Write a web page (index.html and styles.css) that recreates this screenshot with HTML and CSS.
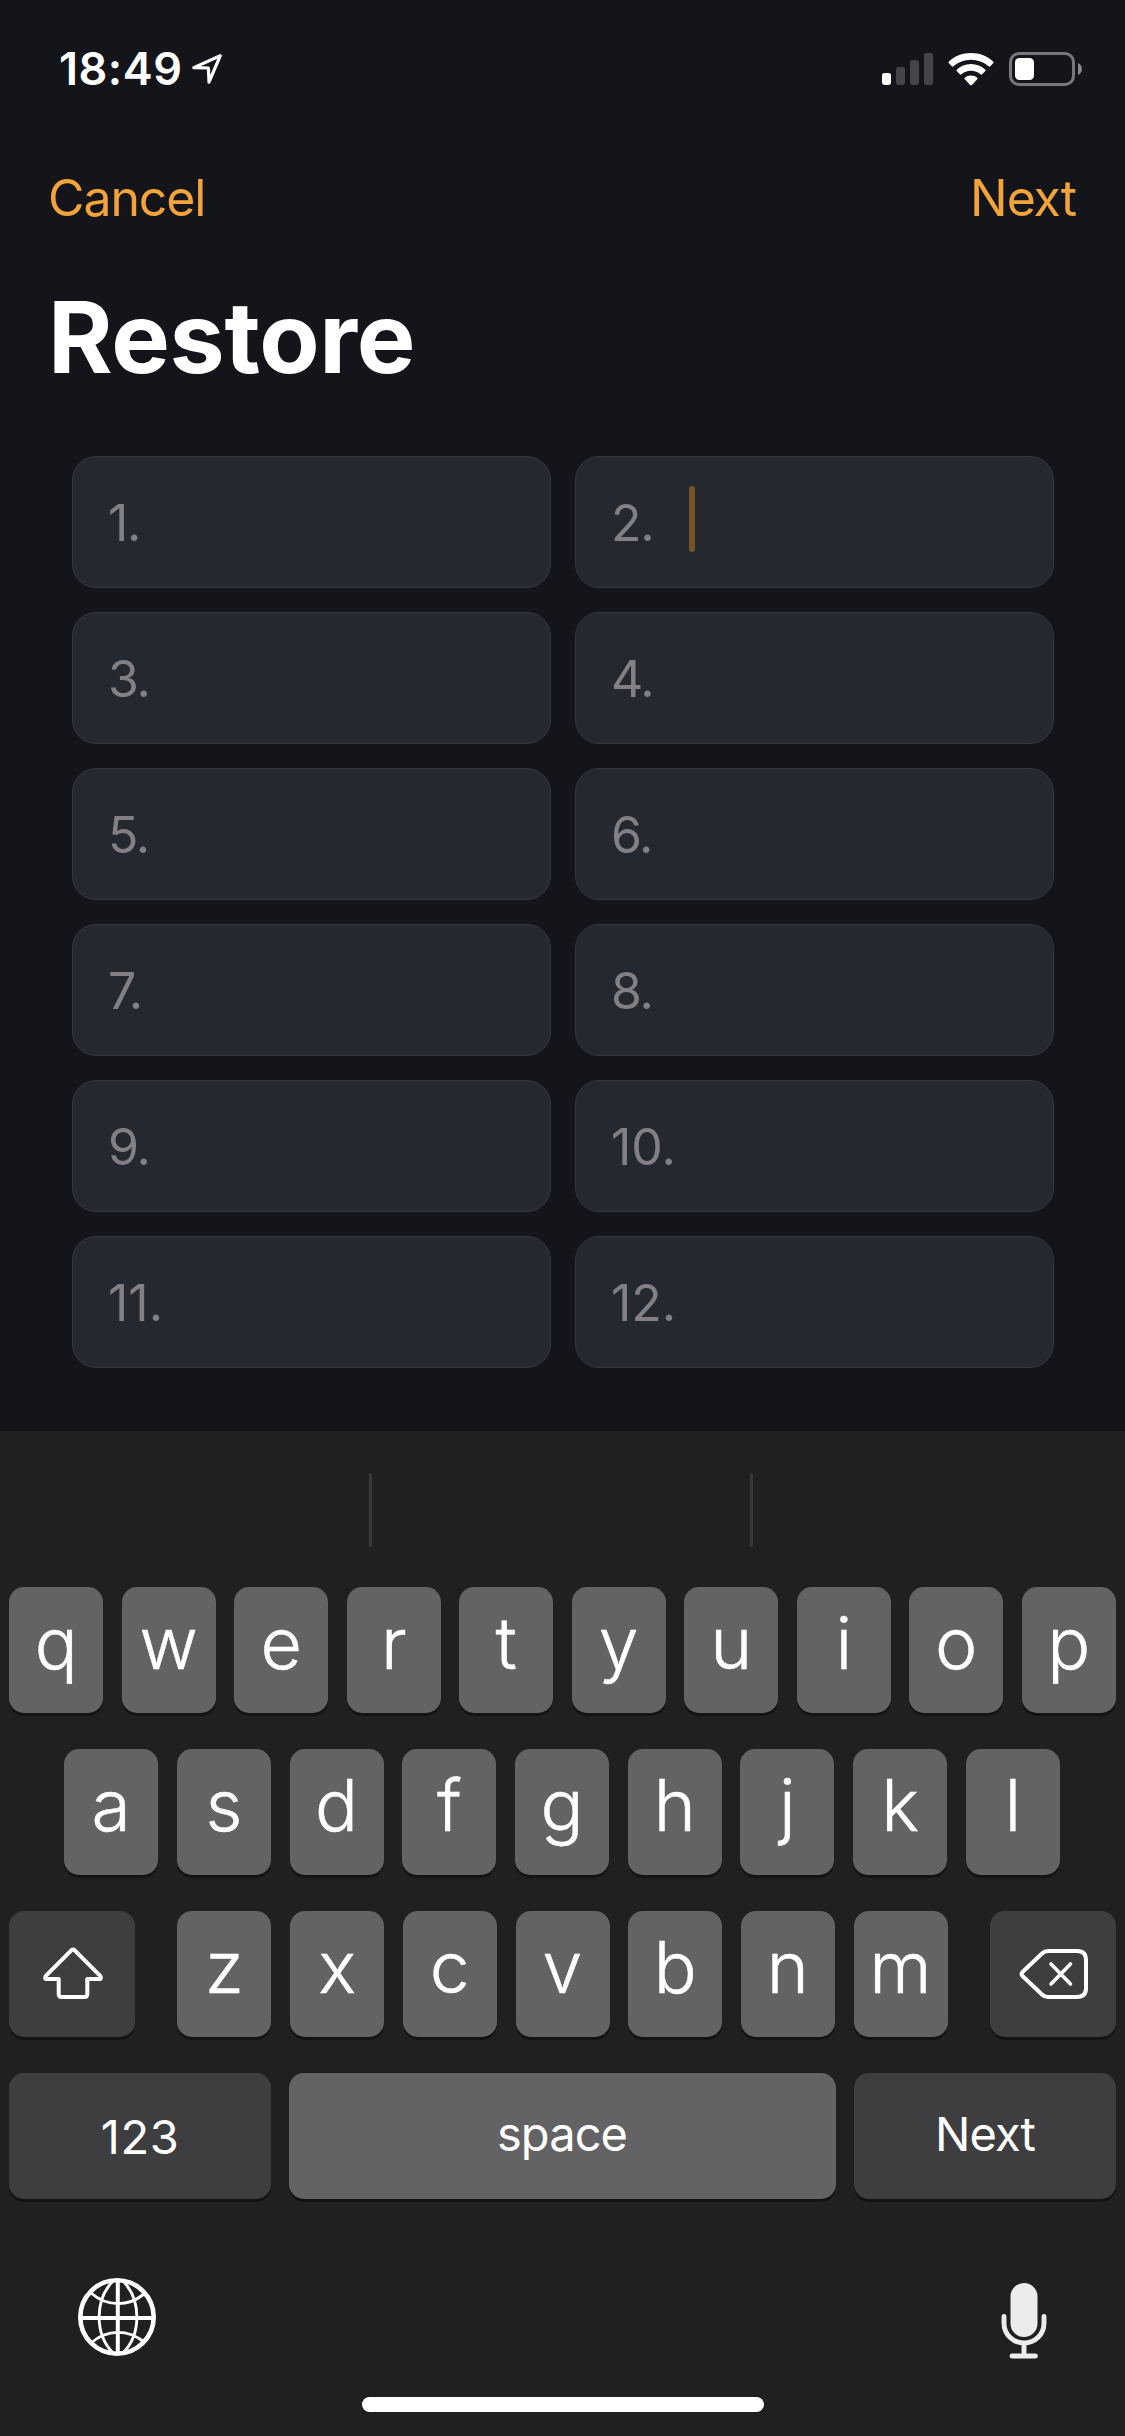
FILE: index.html
```html
<!DOCTYPE html>
<html lang="en">
<head>
<meta charset="utf-8">
<title>Restore</title>
<link rel="stylesheet" href="styles.css">
</head>
<body>
<div class="screen">
  <header class="status">
    <div class="status-left">
      <span class="time">18:49</span>
      <svg class="location" width="32" height="32" viewBox="0 0 32 32"><path d="M29.2 2.8 L2.8 14.6 L17.4 15 L18 29.2 Z" fill="none" stroke="#fff" stroke-width="3.2" stroke-linejoin="round"/></svg>
    </div>
    <div class="status-right">
      <svg width="51" height="32" viewBox="0 0 51 32"><rect y="20" width="9" height="12" rx="2.4" fill="#fff"/><g fill="#444549"><rect x="14" y="14" width="9" height="18" rx="2.4"/><rect x="28" y="7" width="9" height="25" rx="2.4"/><rect x="42" y="0" width="9" height="32" rx="2.4"/></g></svg>
      <svg class="wifi" width="46" height="33" viewBox="0 0 46 33" fill="#fff"><path d="M23 0C32 0 39.5 3.300 45.300 8.700Q46 9.400 45.300 10.100L42.300 13.300Q41.500 14 40.700 13.300C35.800 8.900 29.800 6.700 23 6.700S10.200 8.900 5.300 13.300Q4.500 14 3.700 13.300L.7 10.100Q0 9.400.7 8.700C6.500 3.300 14 0 23 0Z"/><path d="M23 11C28.700 11 33.600 13.200 37.300 16.700Q38 17.400 37.300 18.100L34.200 21.300Q33.400 22 32.600 21.300C29.900 18.900 26.800 17.700 23 17.700S16.100 18.900 13.400 21.300Q12.600 22 11.800 21.300L8.700 18.100Q8 17.400 8.700 16.700C12.400 13.200 17.300 11 23 11Z"/><path d="M23 22.500C25.500 22.500 27.600 23.400 29.200 24.700Q30 25.400 29.200 26.200L23.900 31.900Q23 32.800 22.100 31.900L16.800 26.200Q16 25.400 16.800 24.700C18.400 23.400 20.500 22.500 23 22.500Z"/></svg>
      <svg class="battery" width="74" height="34" viewBox="0 0 74 34"><rect x="1.500" y="1.500" width="63" height="31" rx="8.500" fill="none" stroke="#77787b" stroke-width="3"/><rect x="6" y="6" width="19" height="22" rx="4.500" fill="#fff"/><path d="M69 11C71.500 12 73 14.500 73 17S71.500 22 69 23Z" fill="#88898b"/></svg>
    </div>
  </header>
  <nav class="nav"><span class="link">Cancel</span><span class="link">Next</span></nav>
  <h1 class="title">Restore</h1>
  <main class="words">
    <div class="word">1.</div><div class="word">2.<i class="caret"></i></div>
    <div class="word">3.</div><div class="word">4.</div>
    <div class="word">5.</div><div class="word">6.</div>
    <div class="word">7.</div><div class="word">8.</div>
    <div class="word">9.</div><div class="word two-digit">10.</div>
    <div class="word two-digit">11.</div><div class="word two-digit">12.</div>
  </main>
  <section class="keyboard">
    <div class="suggestions"><i></i><i></i></div>
    <div class="keys">
      <div class="row"><b>q</b><b>w</b><b>e</b><b>r</b><b>t</b><b>y</b><b>u</b><b>i</b><b>o</b><b>p</b></div>
      <div class="row inner home-row"><b>a</b><b>s</b><b>d</b><b>f</b><b>g</b><b>h</b><b>j</b><b>k</b><b>l</b></div>
      <div class="row spread">
        <span class="fn square shift"><svg width="62" height="54" viewBox="0 0 62 54"><path d="M29.300 3.300Q31 1.700 32.700 3.300L57.700 28.300Q60.500 32 57 32H45.300V47Q45.300 50 42.300 50H19.700Q16.700 50 16.700 47V32H5Q1.500 32 4.300 28.300Z" fill="none" stroke="#fff" stroke-width="4" stroke-linejoin="round"/></svg></span>
        <div class="row inner"><b>z</b><b>x</b><b>c</b><b>v</b><b>b</b><b>n</b><b>m</b></div>
        <span class="fn square delete"><svg width="70" height="52" viewBox="0 0 70 52" fill="none" stroke="#fff" stroke-width="4" stroke-linecap="round" stroke-linejoin="round"><path d="M29 3H58Q67 3 67 12V40Q67 49 58 49H29Q25.500 49 23 46.500L3.500 28Q1.500 26 3.500 24L23 5.500Q25.500 3 29 3Z"/><path d="M32 16L51.500 36M51.500 16L32 36" stroke-width="3.600"/></svg></span>
      </div>
      <div class="row spread">
        <span class="fn wide numbers">123</span><span class="fn space">space</span><span class="fn wide next">Next</span>
      </div>
    </div>
    <div class="dock">
      <svg width="78" height="78" viewBox="0 0 78 78" fill="none" stroke="#fff"><circle cx="39" cy="39" r="36.700" stroke-width="4.600"/><path d="M39.800 2V76M2 40H76" stroke-width="4"/><g stroke-width="2.900"><path d="M35 3C16.500 22 16.500 56 35 75M45 3C63.500 22 63.500 56 45 75M13 15C29 29 50 29 66 16M13 65C29 51 50 51 66 64"/></g></svg>
      <svg width="46" height="76" viewBox="0 0 46 76" fill="none" stroke="#ececec" stroke-linecap="round"><rect x="9.500" y="0" width="27" height="54" rx="13.500" fill="#ececec" stroke="none"/><path d="M3 33.500V40C3 51.500 12 60 23 60S43 51.500 43 40V33.500M23 60V72M11 73H34.500" stroke-width="4.900"/></svg>
    </div>
    <div class="home"></div>
  </section>
</div>
</body>
</html>
```
FILE: styles.css
```css
* { box-sizing: border-box; }
body { margin: 0; background: #14151a; font-family: Inter, "Liberation Sans", sans-serif; color: #fff; }
.screen { width: 1125px; height: 2436px; display: flex; flex-direction: column; overflow: hidden; }
svg { display: block; flex: none; }

.status { height: 138px; padding: 0 42px 0 59px; display: flex; justify-content: space-between; align-items: center; }
.status-left, .status-right { display: flex; align-items: center; }
.time { font-size: 45px; line-height: 54px; font-weight: 600; letter-spacing: 0.5px; width: 132px; }
.wifi { margin-left: 15px; }
.battery { margin-left: 15px; }

.nav { height: 120px; padding: 0 49px 0 48px; display: flex; justify-content: space-between; align-items: center; }
.link { color: #f2a33a; font-size: 50px; line-height: 60px; letter-spacing: -1.1px; }
.title { margin: 15px 0 -1px; padding-left: 48px; height: 130px; font-size: 98.500px; line-height: 130px; font-weight: 700; letter-spacing: -0.3px; }

.words { margin: 54px 71px 0 72px; display: grid; grid-template-columns: 1fr 1fr; gap: 24px; }
.word { height: 132px; padding: 2px 0 0 35px; border: 1px solid #34373e; border-radius: 24px; background: #25282f; color: #808085; font-size: 50px; line-height: 60px; letter-spacing: -1.300px; display: flex; align-items: center; }
.two-digit { letter-spacing: 0; }
.caret { width: 6px; height: 66px; margin: 0 0 8px 36px; border-radius: 3px; background: #755525; }

.keyboard { margin-top: 63px; flex: 1; background: #202022; display: flex; flex-direction: column; }
.suggestions { height: 156px; padding: 42px 372px 39px 369px; display: flex; justify-content: space-between; }
.suggestions i { width: 3px; height: 74px; border-radius: 1.500px; background: #38383a; }
.keys { padding: 0 9px; display: flex; flex-direction: column; gap: 36px; }
.row { display: flex; justify-content: center; gap: 18.500px; }
.row.inner { gap: 18.700px; }
.home-row { padding-right: 1px; }
.row.spread { justify-content: space-between; gap: 0; }
.row b { width: 94px; height: 126px; border-radius: 15px; background: #636365; box-shadow: 0 3px 0 #131315; text-align: center; font-weight: 350; -webkit-text-stroke: 0.500px #fff; font-size: 71.500px; line-height: 112px; }
.fn { height: 126px; border-radius: 15px; background: #3e3e40; box-shadow: 0 3px 0 #131315; display: flex; justify-content: center; align-items: center; font-size: 47px; padding-bottom: 5px; }
.square { width: 126px; padding: 0; }
.shift { padding-left: 1px; }
.delete { padding-left: 1px; }
.wide { width: 262px; }
.numbers { padding-bottom: 0; letter-spacing: 0.6px; }
.space { width: 547px; margin-right: 1px; background: #636365; letter-spacing: -0.9px; }
.next { letter-spacing: -0.9px; }
.dock { margin-top: 79px; padding: 0 78px; display: flex; justify-content: space-between; align-items: flex-start; }
.dock svg + svg { margin-top: 5px; }
.home { width: 402px; height: 15px; margin: 38px 0 0 362px; border-radius: 7.500px; background: #fff; }
```
